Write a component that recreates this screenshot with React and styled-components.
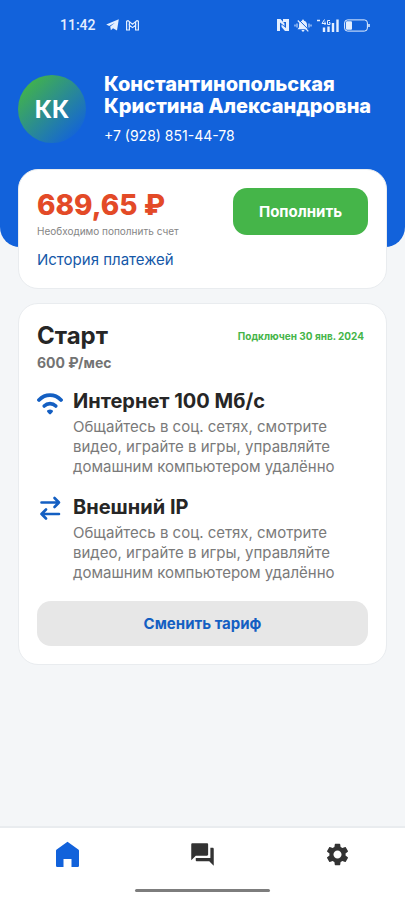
import React from "react";
import styled, { createGlobalStyle } from "styled-components";
import { MdQuestionAnswer, MdSettings } from "react-icons/md";

const services = [
  { id: "internet", title: "Интернет 100 Мб/с", icon: WifiIcon },
  { id: "ip", title: "Внешний IP", icon: ArrowsIcon },
];

const SERVICE_TEXT =
  "Общайтесь в соц. сетях, смотрите видео, играйте в игры, управляйте домашним компьютером удалённо";

function WifiIcon() {
  return (
    <svg width="26" height="22" viewBox="0 0 26 22" fill="none" stroke="currentColor" strokeLinecap="round">
      <path d="M2 7C8.200 .5 17.800 .5 24 7" strokeWidth="3.8" />
      <path d="M7.200 13C10.400 9.800 15.600 9.800 18.800 13" strokeWidth="3.600" />
      <path d="M11.200 18.200Q13 17 14.800 18.200L13 20.200Z" fill="currentColor" strokeWidth="2.400" strokeLinejoin="round" />
    </svg>
  );
}

function ArrowsIcon() {
  return (
    <svg
      width="26"
      height="28"
      viewBox="0 0 26 28"
      fill="none"
      stroke="currentColor"
      strokeWidth="2.6"
      strokeLinecap="round"
      strokeLinejoin="round"
    >
      <path d="M4.500 6.500H22M17.500 2L22 6.500L17.500 11" />
      <path d="M22 18H4.500M9 13.500L4.500 18L9 22.500" />
    </svg>
  );
}

function HomeIcon() {
  return (
    <svg width="27" height="27" viewBox="0 0 27 27" fill="currentColor">
      <path d="M13.500 .8L24.300 8.400Q25 8.900 25 9.800V24.800Q25 26 23.800 26H17.500V18H9.500V26H3.200Q2 26 2 24.800V9.800Q2 8.900 2.700 8.400Z" />
    </svg>
  );
}

function TelegramIcon() {
  return (
    <svg width="13" height="12" viewBox="0 0 13 12" fill="currentColor">
      <path d="M.2 5.500L12.800.2L11 11.600L7 9.200L4.900 11.200L4.200 7.600L9 3.800L3.200 6.900Z" />
    </svg>
  );
}

function MailIcon() {
  return (
    <svg width="13" height="11" viewBox="0 0 13 11" fill="none" stroke="currentColor" strokeWidth="1.2">
      <path d="M.6 1.200L2 .6L6.500 4.300L11 .6L12.400 1.200V10H9.600V5.200L6.500 7.600L3.400 5.200V10H.6Z" />
      <path d="M3.400 5.200V2M9.600 5.200V2" />
    </svg>
  );
}

function NfcIcon() {
  return (
    <svg width="12" height="12" viewBox="0 0 12 12" fill="currentColor">
      <path d="M0 0H3.500L7.500 4.500V7L3 3.500V12H0Z" />
      <path d="M12 12H8L4.500 8V5.500L9 9V3H6V0H12Z" />
    </svg>
  );
}

function MutedBellIcon() {
  return (
    <svg width="18" height="13" viewBox="0 0 18 13" fill="currentColor">
      <path d="M9 .5Q10 .5 10 1.700Q13 2.500 13 6V8.200L14.500 10.200H3.500L5 8.200V6Q5 2.500 8 1.700Q8 .5 9 .5ZM7.500 11H10.500Q10.300 12.700 9 12.700T7.500 11Z" />
      <path d="M4.800.8L15 11.200" stroke="#1262db" strokeWidth="1" />
      <path d="M3.800 1.500L14.300 12.300" stroke="currentColor" strokeWidth="1.200" />
      <path d="M1 5.500V7.500M3 4.500V8.500M15 4.500V8.500M17 5.500V7.500" stroke="currentColor" />
    </svg>
  );
}

function SignalIcon() {
  return (
    <svg width="22" height="13" viewBox="0 0 22 13" fill="none" stroke="currentColor">
      <path d="M0 1.500H3" strokeWidth="1.500" />
      <path d="M7.500.5L5 4.500H9M8 2.500V6M13 1.500H10.500V5.500H13V3.500H12" />
      <path d="M7 13V8.500M11.500 13V7.500M16 13V4M20.500 13V.5" strokeWidth="2.4" />
    </svg>
  );
}

function BatteryIcon() {
  return (
    <svg width="26" height="13" viewBox="0 0 26 13" fill="none">
      <rect x=".6" y=".9" width="22.800" height="11.200" rx="3" stroke="currentColor" />
      <rect x="2" y="2.300" width="6" height="8.400" rx="1" fill="currentColor" />
      <path d="M25 5V8" stroke="currentColor" strokeWidth="1.500" />
    </svg>
  );
}

const App = () => {
  return (
    <>
      <GlobalStyle />
      <Page>
        <Header>
          <StatusBar>
            <StatusGroup $gap="10px">
              <Clock>11:42</Clock>
              <StatusGroup $gap="7px">
                <TelegramIcon />
                <MailIcon />
              </StatusGroup>
            </StatusGroup>
            <StatusGroup $gap="5px">
              <NfcIcon />
              <MutedBellIcon />
              <SignalIcon />
              <BatteryIcon />
            </StatusGroup>
          </StatusBar>
          <Profile>
            <Avatar>КК</Avatar>
            <div>
              <UserName>
                Константинопольская
                <br />
                Кристина Александровна
              </UserName>
              <Phone>+7 (928) 851-44-78</Phone>
            </div>
          </Profile>
        </Header>

        <Content>
          <Card>
            <BalanceRow>
              <div>
                <Balance>689,65 ₽</Balance>
                <BalanceHint>Необходимо пополнить счет</BalanceHint>
              </div>
              <TopUpButton type="button">Пополнить</TopUpButton>
            </BalanceRow>
            <HistoryLink href="#history">История платежей</HistoryLink>
          </Card>

          <Card>
            <TariffHeader>
              <TariffName>Старт</TariffName>
              <ConnectedAt>Подключен 30 янв. 2024</ConnectedAt>
            </TariffHeader>
            <Price>600 ₽/мес</Price>
            <ServiceList>
              {services.map(({ id, title, icon: Icon }) => (
                <Service key={id}>
                  <ServiceIcon>
                    <Icon />
                  </ServiceIcon>
                  <div>
                    <ServiceTitle>{title}</ServiceTitle>
                    <ServiceText>{SERVICE_TEXT}</ServiceText>
                  </div>
                </Service>
              ))}
            </ServiceList>
            <ChangeButton type="button">Сменить тариф</ChangeButton>
          </Card>
        </Content>

        <Footer>
          <Nav>
            <NavLink href="#home" aria-label="Главная" $active>
              <HomeIcon />
            </NavLink>
            <NavLink href="#chat" aria-label="Чат">
              <MdQuestionAnswer size={27} />
            </NavLink>
            <NavLink href="#settings" aria-label="Настройки">
              <MdSettings size={27} />
            </NavLink>
          </Nav>
          <HomeIndicator />
        </Footer>
      </Page>
    </>
  );
};

export default App;

// Styled Components

const GlobalStyle = createGlobalStyle`
  * {
    box-sizing: border-box;
  }

  body {
    margin: 0;
    background-color: #f4f6f8;
    font-family: Inter, "Open Sans", sans-serif;
  }

  h1, h2, h3, p, ul {
    margin: 0;
    padding: 0;
  }

  svg {
    display: block;
    flex-shrink: 0;
  }
`;

const Page = styled.div`
  min-height: 100vh;
  display: flex;
  flex-direction: column;
`;

const Header = styled.header`
  padding-bottom: 102px;
  border-radius: 0 0 20px 20px;
  background-color: #1262db;
  color: #ffffff;
`;

const StatusBar = styled.div`
  display: flex;
  align-items: center;
  justify-content: space-between;
  height: 50px;
  padding: 0 35px 0 60px;
  color: #e4efff;
`;

const StatusGroup = styled.div`
  display: flex;
  align-items: center;
  gap: ${({ $gap }) => $gap};
`;

const Clock = styled.span`
  font-family: Roboto, sans-serif;
  font-size: 14px;
  font-weight: 500;
`;

const Profile = styled.div`
  display: flex;
  align-items: center;
  gap: 18px;
  padding: 23px 18px 0;
`;

const Avatar = styled.div`
  display: flex;
  align-items: center;
  justify-content: center;
  flex-shrink: 0;
  width: 68px;
  height: 68px;
  border-radius: 50%;
  background: linear-gradient(135deg, #43b548 10%, #1262db 90%);
  font-size: 24px;
  font-weight: 700;
`;

const UserName = styled.h1`
  font-size: 20px;
  font-weight: 800;
  line-height: 22px;
  white-space: nowrap;
`;

const Phone = styled.p`
  margin-top: 10px;
  font-size: 14px;
  line-height: 18px;
`;

const Content = styled.main`
  flex: 1;
  display: flex;
  flex-direction: column;
  gap: 14px;
  margin-top: -78px;
  padding: 0 18px 20px;
`;

const Card = styled.section`
  padding: 18px;
  border: 1px solid #e9ecef;
  border-radius: 20px;
  background-color: #ffffff;
`;

const BalanceRow = styled.div`
  display: flex;
  align-items: flex-start;
  justify-content: space-between;
`;

const Balance = styled.p`
  color: #e34a27;
  font-size: 28px;
  font-weight: 800;
  line-height: 34px;
`;

const BalanceHint = styled.p`
  margin-top: 2px;
  color: #858585;
  font-size: 10px;
  line-height: 14px;
`;

const Button = styled.button`
  border: none;
  border-radius: 14px;
  font-family: inherit;
  font-size: 15px;
  font-weight: 700;
  cursor: pointer;
`;

const TopUpButton = styled(Button)`
  width: 135px;
  height: 47px;
  background-color: #45b549;
  color: #ffffff;
`;

const HistoryLink = styled.a`
  display: block;
  width: fit-content;
  margin-top: 12px;
  color: #1558a8;
  font-size: 15px;
  line-height: 20px;
  text-decoration: none;
`;

const TariffHeader = styled.div`
  display: flex;
  align-items: center;
  justify-content: space-between;
  padding-right: 4px;
`;

const TariffName = styled.h2`
  color: #262626;
  font-size: 24px;
  font-weight: 700;
  line-height: 28px;
`;

const ConnectedAt = styled.span`
  color: #45b549;
  font-size: 10px;
  font-weight: 700;
`;

const Price = styled.p`
  margin-top: 2px;
  color: #737373;
  font-size: 14px;
  font-weight: 700;
  line-height: 22px;
`;

const ServiceList = styled.ul`
  display: flex;
  flex-direction: column;
  gap: 17px;
  margin-top: 14px;
  list-style: none;
`;

const Service = styled.li`
  display: flex;
  gap: 10px;
`;

const ServiceIcon = styled.span`
  display: flex;
  align-items: center;
  height: 32px;
  color: #145fc2;
`;

const ServiceTitle = styled.h3`
  color: #262626;
  font-size: 20px;
  font-weight: 700;
  line-height: 26px;
`;

const ServiceText = styled.p`
  max-width: 280px;
  margin-top: 3px;
  color: #7a7a7a;
  font-size: 15px;
  line-height: 20px;
`;

const ChangeButton = styled(Button)`
  width: 100%;
  height: 45px;
  margin-top: 18px;
  background-color: #e7e7e7;
  color: #145fc2;
`;

const Footer = styled.footer`
  display: flex;
  flex-direction: column;
  align-items: center;
  padding-bottom: 8px;
  border-top: 2px solid #e9ecef;
  background-color: #ffffff;
`;

const Nav = styled.nav`
  display: grid;
  grid-template-columns: repeat(3, 1fr);
  width: 100%;
`;

const NavLink = styled.a`
  display: flex;
  align-items: center;
  justify-content: center;
  height: 52px;
  color: ${({ $active }) => ($active ? "#1262db" : "#333333")};
`;

const HomeIndicator = styled.div`
  width: 135px;
  height: 3px;
  margin-top: 9px;
  border-radius: 2px;
  background-color: #7d7d7d;
`;
